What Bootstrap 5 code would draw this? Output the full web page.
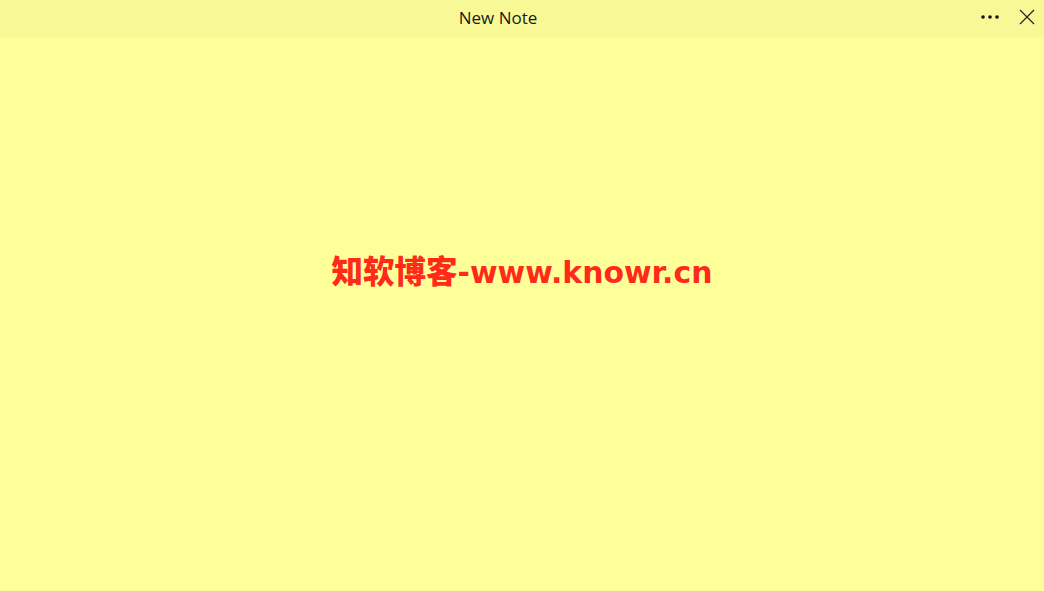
<!DOCTYPE html>
<html lang="zh">
<head>
<meta charset="utf-8">
<title>New Note</title>
<link href="https://cdn.jsdelivr.net/npm/bootstrap@5.3.0/dist/css/bootstrap.min.css" rel="stylesheet">
<style>
html, body { height: 100%; }
body { background: #ffff99; overflow: hidden; }
.note-bar { height: 37px; background: #f9f896; }
.note-spacer { width: 23px; }
.note-title { font-family: "Open Sans", "Noto Sans", sans-serif; font-size: 17px; color: #1a1a1a; line-height: 36px; }
.note-btn { width: 34px; height: 34px; padding: 0; border: 0; background: transparent; }
.note-gap { width: 3px; }
.note-body { padding-top: 209px; }
.note-text { font-family: "DejaVu Sans", "Noto Sans CJK SC", sans-serif; font-weight: 700; color: #ff2a1a; font-size: 29.9px; line-height: 46px; white-space: nowrap; }
.note-cjk { font-family: "Noto Sans CJK SC", sans-serif; font-weight: 900; font-size: 31.5px; }
</style>
</head>
<body>
<div class="d-flex flex-column h-100">
  <div class="note-bar d-flex align-items-start flex-shrink-0">
    <div class="note-spacer"></div>
    <div class="note-title flex-grow-1 text-center">New Note</div>
    <button class="note-btn d-flex align-items-center justify-content-center" aria-label="Menu">
      <svg width="18" height="4" viewBox="0 0 18 4"><circle cx="2" cy="2" r="1.8" fill="#111"/><circle cx="9" cy="2" r="1.8" fill="#111"/><circle cx="16" cy="2" r="1.8" fill="#111"/></svg>
    </button>
    <div class="note-gap"></div>
    <button class="note-btn d-flex align-items-center justify-content-center" aria-label="Close">
      <svg width="16" height="16" viewBox="0 0 16 16"><path d="M1 1 15 15M15 1 1 15" stroke="#222" stroke-width="1.2" fill="none"/></svg>
    </button>
  </div>
  <div class="note-body flex-grow-1 text-center">
    <div class="note-text"><span class="note-cjk">知软博客</span>-www.knowr.cn</div>
  </div>
</div>
<script src="https://cdn.jsdelivr.net/npm/bootstrap@5.3.0/dist/js/bootstrap.bundle.min.js"></script>
</body>
</html>
